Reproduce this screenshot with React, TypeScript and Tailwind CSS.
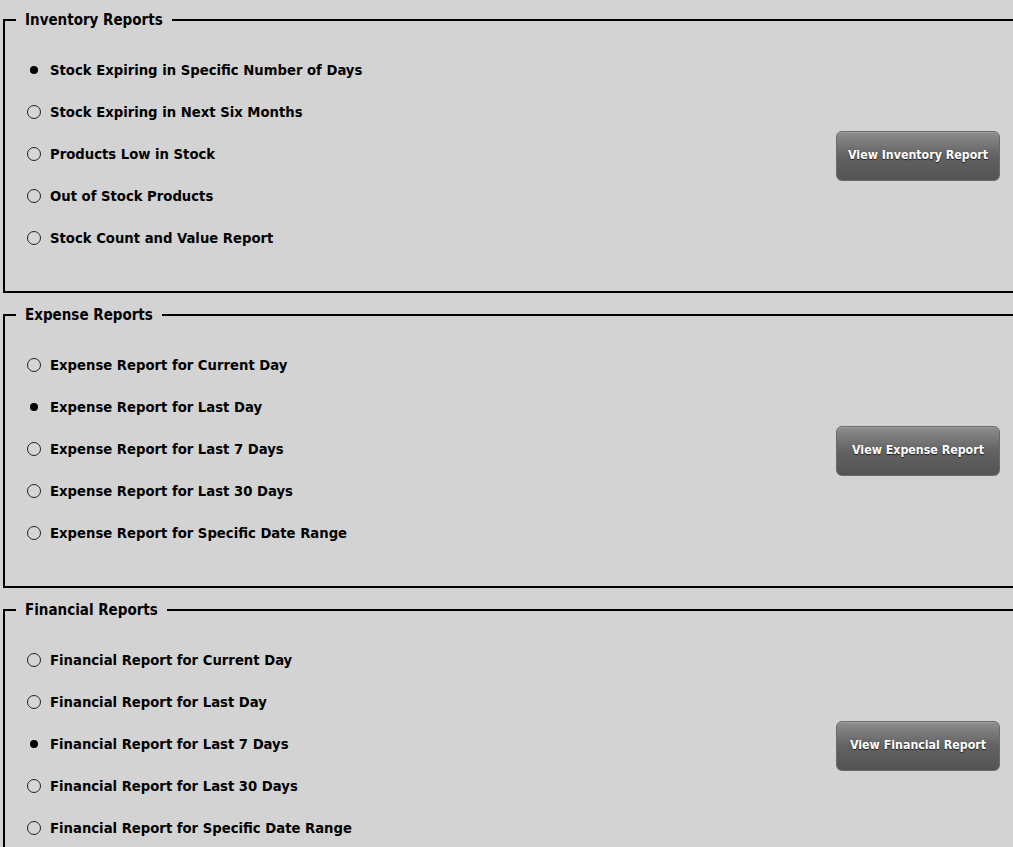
import React from "react";

type Section = {
  title: string;
  button: string;
  options: string[];
  selected: number;
};

const sections: Section[] = [
  {
    title: "Inventory Reports",
    button: "View Inventory Report",
    selected: 0,
    options: [
      "Stock Expiring in Specific Number of Days",
      "Stock Expiring in Next Six Months",
      "Products Low in Stock",
      "Out of Stock Products",
      "Stock Count and Value Report",
    ],
  },
  {
    title: "Expense Reports",
    button: "View Expense Report",
    selected: 1,
    options: [
      "Expense Report for Current Day",
      "Expense Report for Last Day",
      "Expense Report for Last 7 Days",
      "Expense Report for Last 30 Days",
      "Expense Report for Specific Date Range",
    ],
  },
  {
    title: "Financial Reports",
    button: "View Financial Report",
    selected: 2,
    options: [
      "Financial Report for Current Day",
      "Financial Report for Last Day",
      "Financial Report for Last 7 Days",
      "Financial Report for Last 30 Days",
      "Financial Report for Specific Date Range",
    ],
  },
];

function Radio({ checked }: { checked: boolean }) {
  if (checked) {
    return (
      <span className="mr-[9px] flex h-[14px] w-[14px] shrink-0 items-center justify-center">
        <span className="h-[8px] w-[8px] rounded-full bg-black" />
      </span>
    );
  }
  return (
    <span className="mr-[9px] h-[14px] w-[14px] shrink-0 rounded-full border-[1.5px] border-[#222] bg-[#d6d6d6]" />
  );
}

function ReportBox({ section }: { section: Section }) {
  const [sel, setSel] = React.useState(section.selected);
  return (
    <fieldset className="ml-[3px] w-[1040px] border-2 border-black pl-[11px] pb-[32px] pt-[20px]">
      <legend className="px-[9px] text-[15px] leading-[18px] font-bold text-black">
        {section.title}
      </legend>
      <div className="flex w-[984px] items-center justify-between pl-[11px]">
        <div className="flex flex-col">
          {section.options.map((o, i) => (
            <label
              key={o}
              onClick={() => setSel(i)}
              className="flex h-[42px] cursor-pointer items-center text-[14.7px] font-bold text-black"
            >
              <Radio checked={sel === i} />
              {o}
            </label>
          ))}
        </div>
        <button className="mt-[3px] h-[50px] w-[164px] rounded-[6px] border border-[#6a6a6a] bg-linear-to-b from-[#8e8e8e] via-[#626262] to-[#545454] text-[12.3px] font-bold text-white shadow-[inset_0_1px_0_rgba(255,255,255,0.15)] [text-shadow:0_1px_1px_rgba(0,0,0,0.7)]">
          {section.button}
        </button>
      </div>
    </fieldset>
  );
}

export default function App() {
  return (
    <div
      className="min-h-screen w-full overflow-hidden bg-[#d3d3d3] pt-[11px]"
      style={{ fontFamily: '"DejaVu Sans Condensed", "DejaVu Sans", sans-serif' }}
    >
      <div className="flex flex-col gap-[13px]">
        {sections.map((s) => (
          <ReportBox key={s.title} section={s} />
        ))}
      </div>
    </div>
  );
}
